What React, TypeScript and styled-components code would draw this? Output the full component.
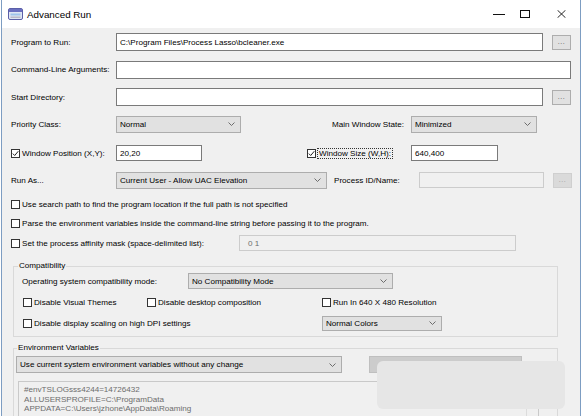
import React from 'react';
import styled, { createGlobalStyle } from 'styled-components';

const GlobalStyle = createGlobalStyle`
  html, body {
    margin: 0;
    padding: 0;
    background: #ffffff;
  }
  body {
    font-family: "Liberation Sans", Arial, sans-serif;
    font-size: 8.1px;
    color: #000;
  }
`;

const Window = styled.div`
  position: relative;
  box-sizing: border-box;
  width: 580px;
  height: 416px;
  margin-left: 1px;
  border-left: 1px solid #7d9dc2;
  border-right: 1px solid #7d9dc2;
  background: #f0f0f0;
  overflow: hidden;
`;

const TitleBar = styled.div`
  display: flex;
  align-items: center;
  height: 28px;
  background: #ffffff;
  padding-left: 6px;
`;

const TitleText = styled.span`
  margin-left: 4px;
  font-size: 9.8px;
  color: #000;
`;

const Controls = styled.div`
  display: flex;
  align-items: center;
  margin-left: auto;
  padding-right: 14px;
  gap: 15px;
  & > svg:last-child {
    margin-left: 12px;
  }
`;

const Form = styled.div`
  padding-left: 9px;
`;

const Row = styled.div<{ $h: number; $mt?: number }>`
  display: flex;
  align-items: center;
  height: ${(p) => p.$h}px;
  margin-top: ${(p) => p.$mt || 0}px;
`;

const Label = styled.span<{ $w: number; $ml?: number }>`
  flex: none;
  width: ${(p) => p.$w}px;
  margin-left: ${(p) => p.$ml || 0}px;
  white-space: nowrap;
`;

const TextBox = styled.div<{ $w: number; $h?: number; $ml?: number; $disabled?: boolean }>`
  flex: none;
  box-sizing: border-box;
  width: ${(p) => p.$w}px;
  height: ${(p) => p.$h || 18}px;
  margin-left: ${(p) => p.$ml || 0}px;
  padding-left: 3px;
  display: flex;
  align-items: center;
  background: ${(p) => (p.$disabled ? '#f0f0f0' : '#ffffff')};
  border: 1px solid ${(p) => (p.$disabled ? '#cccccc' : '#7a7a7a')};
  color: ${(p) => (p.$disabled ? '#6d6d6d' : '#000')};
  white-space: nowrap;
`;

const DotsButton = styled.div<{ $disabled?: boolean }>`
  flex: none;
  box-sizing: border-box;
  width: 19px;
  height: 15px;
  margin-left: 9px;
  display: flex;
  align-items: center;
  justify-content: center;
  background: ${(p) => (p.$disabled ? '#dadada' : '#e1e1e1')};
  border: 1px solid ${(p) => (p.$disabled ? '#cfcfcf' : '#adadad')};
  color: ${(p) => (p.$disabled ? '#9a9a9a' : '#555')};
  font-size: 7px;
  letter-spacing: 0.5px;
  padding-bottom: 2px;
`;

const SelectBox = styled.div<{ $w: number; $h?: number; $ml?: number }>`
  flex: none;
  box-sizing: border-box;
  width: ${(p) => p.$w}px;
  height: ${(p) => p.$h || 17}px;
  margin-left: ${(p) => p.$ml || 0}px;
  padding: 0 5px 0 3px;
  display: flex;
  align-items: center;
  justify-content: space-between;
  background: #e1e1e1;
  border: 1px solid #adadad;
  white-space: nowrap;
`;

const GreyButton = styled.div<{ $w: number; $ml: number }>`
  flex: none;
  box-sizing: border-box;
  width: ${(p) => p.$w}px;
  height: 17px;
  margin-left: ${(p) => p.$ml}px;
  background: #cccccc;
  border: 1px solid #bfbfbf;
`;

const CheckItem = styled.label<{ $w?: number; $ml?: number }>`
  flex: none;
  display: flex;
  align-items: center;
  gap: 2px;
  width: ${(p) => (p.$w ? `${p.$w}px` : 'auto')};
  margin-left: ${(p) => p.$ml || 0}px;
  white-space: nowrap;
`;

const Box = styled.span`
  flex: none;
  box-sizing: border-box;
  width: 9px;
  height: 9px;
  background: #ffffff;
  border: 1px solid #333333;
  display: flex;
  align-items: center;
  justify-content: center;
`;

const FocusText = styled.span`
  outline: 1px dotted #333;
  outline-offset: 0px;
  padding: 0 1px;
`;

const Group = styled.fieldset<{ $mt: number; $pl: number }>`
  box-sizing: border-box;
  width: 545px;
  margin: ${(p) => p.$mt}px 0 0 11px;
  padding: 0 0 3px ${(p) => p.$pl}px;
  border: 1px solid #d9d9d9;
  min-width: 0;
`;

const Legend = styled.legend<{ $ml: number }>`
  padding: 0 1px;
  margin-left: ${(p) => p.$ml}px;
  line-height: 10px;
  font-size: 8.1px;
`;

const EnvList = styled.div`
  box-sizing: border-box;
  display: flex;
  width: 521px;
  height: 60px;
  margin: 8px 0 0 2px;
  background: #f0f0f0;
  border: 1px solid #c9c9c9;
`;

const EnvLines = styled.div`
  flex: 1;
  padding: 3px 0 0 5px;
  line-height: 9.6px;
  color: #6d6d6d;
  white-space: nowrap;
`;

const ScrollStrip = styled.div`
  width: 11px;
  border-left: 1px solid #dcdcdc;
  background: #f0f0f0;
`;

const Watermark = styled.div`
  position: absolute;
  left: 375px;
  top: 361px;
  width: 188px;
  height: 48px;
  border-radius: 6px;
  background: #e6e6e6;
`;

const Chevron = () => (
  <svg width="7" height="4" viewBox="0 0 7 4">
    <path d="M0.5 0.5 L3.5 3.5 L6.5 0.5" fill="none" stroke="#606060" strokeWidth="0.9" />
  </svg>
);

const Tick = () => (
  <svg width="7" height="7" viewBox="0 0 7 7">
    <path d="M0.8 3.6 L2.7 5.5 L6.3 1.2" fill="none" stroke="#222" strokeWidth="1" />
  </svg>
);

const Select: React.FC<{ w: number; ml?: number; h?: number; children: React.ReactNode }> = ({ w, ml, h, children }) => (
  <SelectBox $w={w} $ml={ml} $h={h}>
    <span>{children}</span>
    <Chevron />
  </SelectBox>
);

const Check: React.FC<{ checked?: boolean; w?: number; ml?: number; children: React.ReactNode }> = ({
  checked,
  w,
  ml,
  children,
}) => (
  <CheckItem $w={w} $ml={ml}>
    <Box>{checked && <Tick />}</Box>
    {children}
  </CheckItem>
);

const AppIcon = () => (
  <svg width="15" height="14" viewBox="0 0 15 14">
    <rect x="0.5" y="1.5" width="14" height="11" rx="1.5" fill="#dfe6f3" stroke="#5b5fa8" />
    <rect x="1" y="2" width="13" height="3" fill="#6a6fc0" />
    <rect x="2.5" y="6.5" width="10" height="2" fill="#9fc3ea" />
    <rect x="2.5" y="9.5" width="10" height="1.5" fill="#b8b8c8" />
  </svg>
);

export default function App() {
  return (
    <>
      <GlobalStyle />
      <Window>
        <TitleBar>
          <AppIcon />
          <TitleText>Advanced Run</TitleText>
          <Controls>
            <svg width="12" height="8" viewBox="0 0 12 8">
              <line x1="0" y1="4.5" x2="12" y2="4.5" stroke="#111" strokeWidth="1" />
            </svg>
            <svg width="10" height="8" viewBox="0 0 10 8">
              <rect x="0.5" y="0.5" width="9" height="7" fill="none" stroke="#111" strokeWidth="1" />
            </svg>
            <svg width="9" height="8" viewBox="0 0 9 8">
              <path d="M0.5 0.2 L8.5 7.8 M8.5 0.2 L0.5 7.8" stroke="#111" strokeWidth="0.9" />
            </svg>
          </Controls>
        </TitleBar>

        <Form>
          <Row $h={28}>
            <Label $w={105}>Program to Run:</Label>
            <TextBox $w={427}>{'C:\\Program Files\\Process Lasso\\bcleaner.exe'}</TextBox>
            <DotsButton>...</DotsButton>
          </Row>
          <Row $h={27}>
            <Label $w={105}>Command-Line Arguments:</Label>
            <TextBox $w={455} />
          </Row>
          <Row $h={28}>
            <Label $w={105}>Start Directory:</Label>
            <TextBox $w={427} />
            <DotsButton>...</DotsButton>
          </Row>
          <Row $h={26}>
            <Label $w={105}>Priority Class:</Label>
            <Select w={125}>Normal</Select>
            <Label $w={79} $ml={91}>Main Window State:</Label>
            <Select w={126}>Minimized</Select>
          </Row>
          <Row $h={32}>
            <Check checked w={105}>Window Position (X,Y):</Check>
            <TextBox $w={86} $h={16}>20,20</TextBox>
            <Check checked w={104} ml={105}>
              <FocusText>Window Size (W,H):</FocusText>
            </Check>
            <TextBox $w={87} $h={16}>640,400</TextBox>
          </Row>
          <Row $h={22}>
            <Label $w={105}>Run As...</Label>
            <Select w={211}>Current User - Allow UAC Elevation</Select>
            <Label $w={85} $ml={7}>Process ID/Name:</Label>
            <TextBox $w={125} $h={16} $disabled />
            <DotsButton $disabled>...</DotsButton>
          </Row>
          <Row $h={18} $mt={4}>
            <Check>Use search path to find the program location if the full path is not specified</Check>
          </Row>
          <Row $h={18} $mt={1}>
            <Check>Parse the environment variables inside the command-line string before passing it to the program.</Check>
          </Row>
          <Row $h={20} $mt={1}>
            <Check w={228}>Set the process affinity mask (space-delimited list):</Check>
            <TextBox $w={277} $h={16} $disabled style={{ paddingLeft: 8 }}>
              0 1
            </TextBox>
          </Row>
        </Form>

        <Group $mt={8} $pl={8}>
          <Legend $ml={-4}>Compatibility</Legend>
          <Row $h={20}>
            <Label $w={166}>Operating system compatibility mode:</Label>
            <Select w={205} h={16}>No Compatibility Mode</Select>
          </Row>
          <Row $h={22}>
            <Check w={124} ml={1}>Disable Visual Themes</Check>
            <Check w={175}>Disable desktop composition</Check>
            <Check>Run In 640 X 480 Resolution</Check>
          </Row>
          <Row $h={20}>
            <Check w={299} ml={1}>Disable display scaling on high DPI settings</Check>
            <Select w={120} h={15}>Normal Colors</Select>
          </Row>
        </Group>

        <Group $mt={6} $pl={2}>
          <Legend $ml={1}>Environment Variables</Legend>
          <Row $h={17} $mt={3}>
            <Select w={326}>Use current system environment variables without any change</Select>
            <GreyButton $w={153} $ml={27} />
          </Row>
          <EnvList>
            <EnvLines>
              <div>#envTSLOGsss4244=14726432</div>
              <div>{'ALLUSERSPROFILE=C:\\ProgramData'}</div>
              <div>{'APPDATA=C:\\Users\\jzhone\\AppData\\Roaming'}</div>
            </EnvLines>
            <ScrollStrip />
          </EnvList>
        </Group>

        <Watermark />
      </Window>
    </>
  );
}
